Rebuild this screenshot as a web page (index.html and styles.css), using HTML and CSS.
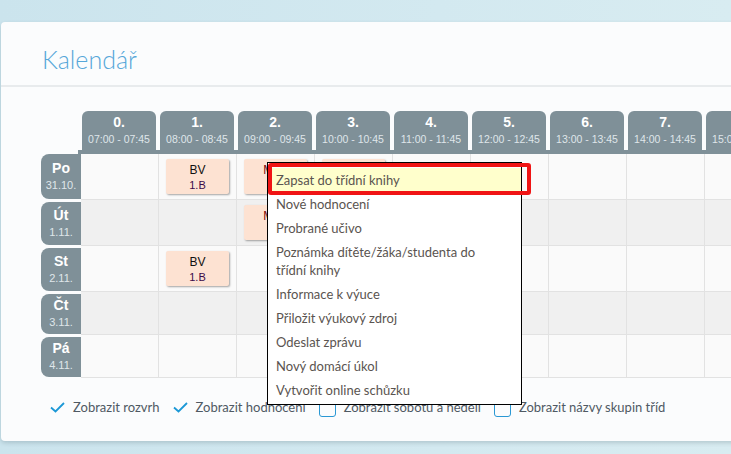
FILE: index.html
```html
<!DOCTYPE html>
<html lang="cs">
<head>
<meta charset="utf-8">
<title>Kalendář</title>
<link rel="stylesheet" href="styles.css">
</head>
<body>
<div class="page">
  <div class="card">
    <div class="card-head"><h1 class="title">Kalendář</h1></div>
    <div class="card-body">
      <div class="timetable">
        <div class="hours">
          <div class="hour"><div class="tab"><div class="num">0.</div><div class="time">07:00 - 07:45</div></div></div>
          <div class="hour"><div class="tab"><div class="num">1.</div><div class="time">08:00 - 08:45</div></div></div>
          <div class="hour"><div class="tab"><div class="num">2.</div><div class="time">09:00 - 09:45</div></div></div>
          <div class="hour"><div class="tab"><div class="num">3.</div><div class="time">10:00 - 10:45</div></div></div>
          <div class="hour"><div class="tab"><div class="num">4.</div><div class="time">11:00 - 11:45</div></div></div>
          <div class="hour"><div class="tab"><div class="num">5.</div><div class="time">12:00 - 12:45</div></div></div>
          <div class="hour"><div class="tab"><div class="num">6.</div><div class="time">13:00 - 13:45</div></div></div>
          <div class="hour"><div class="tab"><div class="num">7.</div><div class="time">14:00 - 14:45</div></div></div>
          <div class="hour"><div class="tab"><div class="num">8.</div><div class="time">15:00 - 15:45</div></div></div>
        </div>

        <div class="day day--odd day--first">
          <div class="day-label"><div class="day-name">Po</div><div class="day-date">31.10.</div></div>
          <div class="cell"></div>
          <div class="cell"><div class="lesson"><div class="subj">BV</div><div class="group">1.B</div></div></div>
          <div class="cell"><div class="lesson lesson--red"><div class="subj">MAT</div><div class="group">1.A</div></div></div>
          <div class="cell"><div class="lesson lesson--red"><div class="subj">MAT</div><div class="group">1.B</div></div></div>
          <div class="cell"></div>
          <div class="cell"></div>
          <div class="cell"></div>
          <div class="cell"></div>
          <div class="cell"></div>
        </div>

        <div class="day day--even">
          <div class="day-label"><div class="day-name">Út</div><div class="day-date">1.11.</div></div>
          <div class="cell"></div>
          <div class="cell"></div>
          <div class="cell"><div class="lesson lesson--red"><div class="subj">MAT</div><div class="group">1.A</div></div></div>
          <div class="cell"></div>
          <div class="cell"></div>
          <div class="cell"></div>
          <div class="cell"></div>
          <div class="cell"></div>
          <div class="cell"></div>
        </div>

        <div class="day day--odd">
          <div class="day-label"><div class="day-name">St</div><div class="day-date">2.11.</div></div>
          <div class="cell"></div>
          <div class="cell"><div class="lesson"><div class="subj">BV</div><div class="group">1.B</div></div></div>
          <div class="cell"></div>
          <div class="cell"></div>
          <div class="cell"></div>
          <div class="cell"></div>
          <div class="cell"></div>
          <div class="cell"></div>
          <div class="cell"></div>
        </div>

        <div class="day day--even">
          <div class="day-label"><div class="day-name">Čt</div><div class="day-date">3.11.</div></div>
          <div class="cell"></div>
          <div class="cell"></div>
          <div class="cell"></div>
          <div class="cell"></div>
          <div class="cell"></div>
          <div class="cell"></div>
          <div class="cell"></div>
          <div class="cell"></div>
          <div class="cell"></div>
        </div>

        <div class="day day--odd">
          <div class="day-label"><div class="day-name">Pá</div><div class="day-date">4.11.</div></div>
          <div class="cell"></div>
          <div class="cell"></div>
          <div class="cell"></div>
          <div class="cell"></div>
          <div class="cell"></div>
          <div class="cell"></div>
          <div class="cell"></div>
          <div class="cell"></div>
          <div class="cell"></div>
        </div>
      </div>

      <div class="options">
        <label class="option">
          <svg class="check" width="15" height="11" viewBox="0 0 15 11"><path d="M1 5.5 L5.5 9.5 L14 1" fill="none" stroke="#1c98d6" stroke-width="1.8"/></svg>
          <span>Zobrazit rozvrh</span>
        </label>
        <label class="option">
          <svg class="check" width="15" height="11" viewBox="0 0 15 11"><path d="M1 5.5 L5.5 9.5 L14 1" fill="none" stroke="#1c98d6" stroke-width="1.8"/></svg>
          <span>Zobrazit hodnocení</span>
        </label>
        <label class="option">
          <span class="box"></span>
          <span>Zobrazit sobotu a neděli</span>
        </label>
        <label class="option">
          <span class="box"></span>
          <span>Zobrazit názvy skupin tříd</span>
        </label>
      </div>
    </div>
  </div>
</div>

<div class="menu">
  <div class="menu-item menu-item--active">Zapsat do třídní knihy</div>
  <div class="menu-item">Nové hodnocení</div>
  <div class="menu-item">Probrané učivo</div>
  <div class="menu-item">Poznámka dítěte/žáka/studenta do třídní knihy</div>
  <div class="menu-item">Informace k výuce</div>
  <div class="menu-item">Přiložit výukový zdroj</div>
  <div class="menu-item">Odeslat zprávu</div>
  <div class="menu-item">Nový domácí úkol</div>
  <div class="menu-item">Vytvořit online schůzku</div>
</div>
<div class="annot"></div>
</body>
</html>
```

FILE: styles.css
```css
html, body {
  margin: 0;
  padding: 0;
}
body {
  width: 731px;
  height: 454px;
  overflow: hidden;
  position: relative;
  background: linear-gradient(90deg, #cbe4ed 0%, #d3e9f0 60%, #d8ecf1 100%);
  font-family: Lato, "Liberation Sans", sans-serif;
}
.page {
  padding: 22px 0 0 1px;
}
.card {
  background: #fbfcfd;
  border-radius: 4px 0 0 4px;
  box-shadow: 0 2px 4px rgba(60, 80, 90, 0.22);
  overflow: hidden;
  margin-right: -12px;
}
.card-head {
  height: 65px;
  box-sizing: border-box;
  padding: 22px 0 0 41px;
  border-bottom: 2px solid #e8ebed;
}
.title {
  margin: 0;
  font-family: Lato, sans-serif;
  font-weight: 300;
  font-size: 25px;
  line-height: 30px;
  color: #56a7d9;
}
.card-body {
  padding: 24px 0 25px 40px;
}
.timetable {
  width: 800px;
}
.hours {
  display: flex;
  margin-left: 37px;
  padding-left: 3px;
  border-bottom: 4px solid #7f9098;
}
.hour {
  flex: none;
  width: 78px;
  padding-left: 1px;
  box-sizing: border-box;
}
.tab {
  width: 74px;
  height: 39px;
  box-sizing: border-box;
  padding-top: 3px;
  background: #7f9098;
  border-radius: 6px 6px 0 0;
  text-align: center;
  font-family: "Liberation Sans", sans-serif;
}
.num {
  color: #fff;
  font-weight: bold;
  font-size: 14px;
  line-height: 17px;
}
.time {
  color: #dfe6ea;
  font-size: 10.5px;
  line-height: 17px;
}
.day {
  display: flex;
}
.day-label {
  flex: none;
  width: 40px;
  margin: 2px 0 1px;
  background: #7f9098;
  border-radius: 8px 0 0 8px;
  display: flex;
  flex-direction: column;
  justify-content: center;
  align-items: center;
  font-family: "Liberation Sans", sans-serif;
}
.day--first .day-label {
  margin-top: 0;
}
.day-name {
  color: #fff;
  font-weight: bold;
  font-size: 14px;
  line-height: 17px;
}
.day-date {
  color: #dfe6ea;
  font-size: 11px;
  line-height: 17px;
}
.cell {
  flex: none;
  width: 78px;
  min-height: 43px;
  box-sizing: border-box;
  border-right: 1px solid #e2e2e2;
  border-bottom: 1px solid #e2e2e2;
}
.day--odd .cell {
  background: #fafafa;
}
.day--even .cell {
  background: #f0f0f0;
}
.lesson {
  width: 63px;
  height: 35px;
  margin: 5px auto;
  box-sizing: border-box;
  padding-top: 3px;
  background: #fde2d2;
  border-radius: 2px;
  box-shadow: 1px 1px 2px rgba(0, 0, 0, 0.35);
  text-align: center;
  font-family: "Liberation Sans", sans-serif;
}
.subj {
  font-size: 12px;
  line-height: 16px;
  color: #111;
}
.group {
  font-size: 11px;
  line-height: 14px;
  color: #3a0a4a;
}
.lesson--red .subj,
.lesson--red .group {
  color: #7a0a0a;
}
.options {
  margin: 20px 0 0 9px;
  display: flex;
  align-items: center;
  height: 18px;
  font-size: 13px;
  line-height: 18px;
  color: #4f5963;
  white-space: nowrap;
}
.option {
  display: inline-flex;
  align-items: center;
  margin-right: 13px;
}
.check {
  flex: none;
  margin-right: 8px;
}
.box {
  flex: none;
  width: 17px;
  height: 15px;
  box-sizing: border-box;
  border: 1.5px solid #2a98d4;
  border-radius: 3px;
  margin-right: 8px;
  position: relative;
  top: 2px;
}
.menu {
  position: absolute;
  left: 267px;
  top: 162px;
  width: 255px;
  box-sizing: border-box;
  border: 1px solid #000;
  background: #fff;
  padding: 5px 0 2px;
  font-family: Lato, sans-serif;
  font-size: 13px;
  line-height: 18px;
  color: #5a5450;
}
.menu-item {
  padding: 3px 24px 3px 8px;
}
.menu-item--active {
  background: #ffffcc;
}
.annot {
  position: absolute;
  left: 268px;
  top: 163px;
  width: 263px;
  height: 32px;
  box-sizing: border-box;
  border: 4px solid #f01414;
  border-radius: 3px;
}
```
